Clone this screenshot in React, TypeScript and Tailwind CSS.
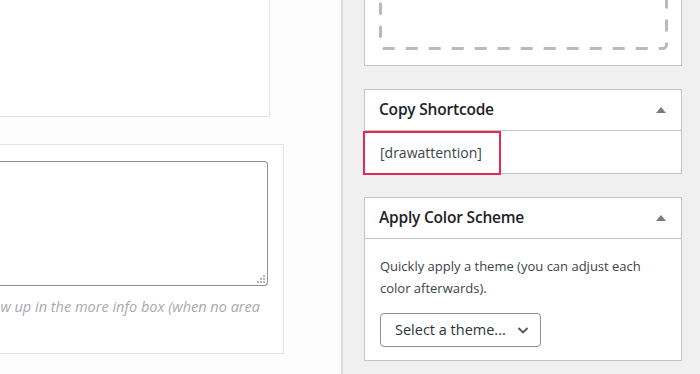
const font = { fontFamily: '"Open Sans", "Noto Sans", sans-serif' };

function Toggle() {
  return (
    <svg width="12" height="8" viewBox="0 0 12 8" className="shrink-0">
      <polygon points="6,1 11,7 1,7" fill="#787c82" />
    </svg>
  );
}

function Box({ title, children }: { title: string; children: React.ReactNode }) {
  return (
    <div className="bg-white border border-[#c3c4c7]">
      <div className="flex items-center justify-between h-[41px] pl-[14px] pr-[14px] border-b border-[#c3c4c7]">
        <h2 className="text-[15.5px] font-semibold text-[#1d2327] tracking-[-0.2px]">{title}</h2>
        <Toggle />
      </div>
      {children}
    </div>
  );
}

export default function App() {
  return (
    <div className="w-[700px] h-[374px] overflow-hidden flex bg-[#f0f0f1]" style={font}>
      {/* main column */}
      <div className="w-[343px] shrink-0 bg-[#fdfdfd] border-r-2 border-[#dcdcde] flex flex-col">
        <div className="w-[270px] h-[117px] bg-white border-r border-b border-[#e2e4e7]" />
        <div className="mt-[27px] w-[284px] h-[210px] bg-white border-t border-r border-b border-[#e2e4e7] pt-[16px]">
          <div className="relative w-[268px] h-[125px] border-t border-r border-b border-[#8c8f94] rounded-r-[4px] bg-white">
            <svg width="9" height="9" viewBox="0 0 9 9" className="absolute right-[1px] bottom-[1px]">
              <rect x="6" y="0" width="2" height="2" fill="#b4b6b8" />
              <rect x="3" y="3" width="2" height="2" fill="#b4b6b8" />
              <rect x="6" y="3" width="2" height="2" fill="#b4b6b8" />
              <rect x="0" y="6" width="2" height="2" fill="#b4b6b8" />
              <rect x="3" y="6" width="2" height="2" fill="#b4b6b8" />
              <rect x="6" y="6" width="2" height="2" fill="#b4b6b8" />
            </svg>
          </div>
          <div className="w-[260px] flex justify-end overflow-hidden mt-[10px]">
            <p className="whitespace-nowrap italic text-[14.5px] text-[#a7aaad]">
              show up in the more info box (when no area
            </p>
          </div>
        </div>
      </div>

      {/* sidebar */}
      <div className="flex-1 pl-[21px] pr-[18px] flex flex-col">
        <div className="h-[66px] bg-white border-x border-b border-[#c3c4c7] pl-[14px] overflow-hidden">
          <svg width="289" height="70" viewBox="0 0 289 70" className="block mt-[-20px]">
            <rect
              x="1.5"
              y="1.5"
              width="286"
              height="67"
              rx="4"
              fill="none"
              stroke="#b8babd"
              strokeWidth="3"
              strokeDasharray="12 11"
              strokeDashoffset="4"
            />
          </svg>
        </div>

        <div className="relative mt-[23px]">
          <Box title="Copy Shortcode">
            <div className="h-[42px] pl-[15px] flex items-center">
              <span className="text-[14px] text-[#3c434a]">[drawattention]</span>
            </div>
          </Box>
          <div className="absolute left-[-1px] top-[42px] w-[138px] h-[44px] border-2 border-[#e8265a]" />
        </div>

        <div className="mt-[23px]">
          <Box title="Apply Color Scheme">
            <div className="pt-[16px] pb-[13px] px-[15px]">
              <p className="text-[13px] leading-[22px] text-[#3c434a]">
                Quickly apply a theme (you can adjust each color afterwards).
              </p>
              <div className="mt-[14px] w-[161px] h-[34px] border border-[#8c8f94] rounded-[4px] flex items-center justify-between pl-[14px] pr-[10px]">
                <span className="text-[14.5px] text-[#2c3338]">Select a theme...</span>
                <svg width="14" height="14" viewBox="0 0 14 14">
                  <path d="M2.5 5 L7 9.5 L11.5 5" fill="none" stroke="#50575e" strokeWidth="1.8" />
                </svg>
              </div>
            </div>
          </Box>
        </div>
      </div>
    </div>
  );
}
